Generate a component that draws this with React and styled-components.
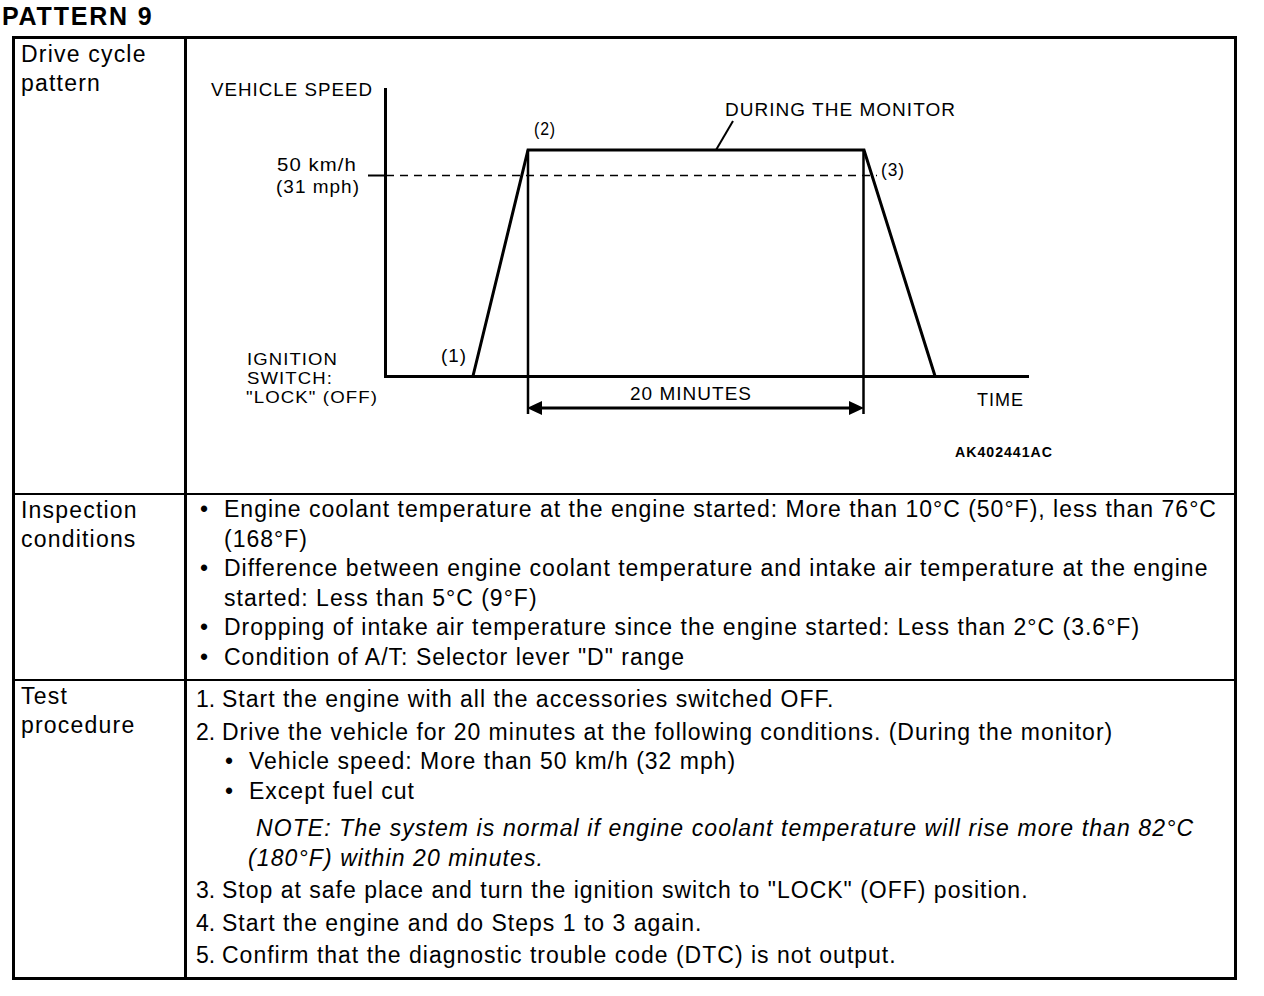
import styled, { createGlobalStyle } from 'styled-components'

const GlobalStyle = createGlobalStyle`
  html, body {
    margin: 0;
    padding: 0;
    background: #fff;
    color: #000;
    font-family: "Liberation Sans", Arial, sans-serif;
  }
`

const labels = [
  { text: 'VEHICLE SPEED', x: 211, y: 96, len: 162 },
  { text: 'DURING THE MONITOR', x: 725, y: 116, len: 231 },
  { text: '(2)', x: 534, y: 135, len: 22 },
  { text: '50 km/h', x: 277, y: 171, len: 80 },
  { text: '(31 mph)', x: 276, y: 193, len: 84 },
  { text: '(3)', x: 881, y: 176, len: 24 },
  { text: '(1)', x: 441, y: 362, len: 26 },
  { text: 'IGNITION', x: 247, y: 365, len: 91, small: true },
  { text: 'SWITCH:', x: 247, y: 384, len: 86, small: true },
  { text: '"LOCK" (OFF)', x: 246, y: 403, len: 132, small: true },
  { text: '20 MINUTES', x: 630, y: 400, len: 122 },
  { text: 'TIME', x: 977, y: 406, len: 47 },
]

function DriveCycleChart() {
  return (
    <Chart width="1047" height="454" viewBox="0 0 1047 454">
      {/* drawn in page coordinates, shifted to the cell origin */}
      <g transform="translate(-187 -39)" stroke="#000" fill="none">
        <line x1="385.5" y1="88" x2="385.5" y2="378" strokeWidth="3" />
        <line x1="384" y1="376.5" x2="1029" y2="376.5" strokeWidth="3" />
        <line x1="368" y1="175.5" x2="386" y2="175.5" strokeWidth="2" />
        <line x1="386" y1="175.5" x2="877" y2="175.5" strokeWidth="1.5" strokeDasharray="8 6" />
        <polyline points="473,376 528,150 864,150 935,376" strokeWidth="3" strokeLinejoin="miter" />
        <line x1="528" y1="150" x2="528" y2="414" strokeWidth="2.5" />
        <line x1="863.5" y1="150" x2="863.5" y2="414" strokeWidth="2.5" />
        <line x1="733" y1="121" x2="716" y2="150" strokeWidth="2" />
        <line x1="538" y1="408" x2="852" y2="408" strokeWidth="3" />
        <polygon points="527,408 542,401 542,415" fill="#000" stroke="none" />
        <polygon points="864,408 849,401 849,415" fill="#000" stroke="none" />
        <g stroke="none" fill="#000">
          {labels.map(l => (
            <ChartLabel
              key={l.text}
              $small={l.small}
              x={l.x}
              y={l.y}
              textLength={l.len}
              lengthAdjust="spacingAndGlyphs">
              {l.text}
            </ChartLabel>
          ))}
          <ChartCode x="955" y="457" textLength="98" lengthAdjust="spacingAndGlyphs">
            AK402441AC
          </ChartCode>
        </g>
      </g>
    </Chart>
  )
}

export default function App() {
  return (
    <>
      <GlobalStyle />
      <Page>
        <Title>PATTERN 9</Title>
        <Sheet>
          <Row $height={454}>
            <Label>
              Drive cycle
              <br />
              pattern
            </Label>
            <Cell>
              <DriveCycleChart />
            </Cell>
          </Row>

          <Row $height={184}>
            <Label>
              Inspection
              <br />
              conditions
            </Label>
            <Cell>
              <List>
                <Item>
                  <Bullet>•</Bullet>
                  <Text>
                    <Line>Engine coolant temperature at the engine started: More than 10°C (50°F), less than 76°C</Line>
                    <Line>(168°F)</Line>
                  </Text>
                </Item>
                <Item>
                  <Bullet>•</Bullet>
                  <Text>
                    <Line>Difference between engine coolant temperature and intake air temperature at the engine</Line>
                    <Line>started: Less than 5°C (9°F)</Line>
                  </Text>
                </Item>
                <Item>
                  <Bullet>•</Bullet>
                  <Text>
                    <Line>Dropping of intake air temperature since the engine started: Less than 2°C (3.6°F)</Line>
                  </Text>
                </Item>
                <Item>
                  <Bullet>•</Bullet>
                  <Text>
                    <Line>Condition of A/T: Selector lever "D" range</Line>
                  </Text>
                </Item>
              </List>
            </Cell>
          </Row>

          <Row $height={296}>
            <Label>
              Test
              <br />
              procedure
            </Label>
            <Cell>
              <Steps>
                <Step>
                  <Num>1.</Num>
                  <Text>
                    <Line>Start the engine with all the accessories switched OFF.</Line>
                  </Text>
                </Step>
                <Step>
                  <Num>2.</Num>
                  <Text>
                    <Line>Drive the vehicle for 20 minutes at the following conditions. (During the monitor)</Line>
                    <SubList>
                      <SubItem>
                        <Bullet $sub>•</Bullet>
                        <Line>Vehicle speed: More than 50 km/h (32 mph)</Line>
                      </SubItem>
                      <SubItem>
                        <Bullet $sub>•</Bullet>
                        <Line>Except fuel cut</Line>
                      </SubItem>
                    </SubList>
                    <Note>
                      <Line $indent>NOTE: The system is normal if engine coolant temperature will rise more than 82°C</Line>
                      <Line>(180°F) within 20 minutes.</Line>
                    </Note>
                  </Text>
                </Step>
                <Step>
                  <Num>3.</Num>
                  <Text>
                    <Line>Stop at safe place and turn the ignition switch to "LOCK" (OFF) position.</Line>
                  </Text>
                </Step>
                <Step>
                  <Num>4.</Num>
                  <Text>
                    <Line>Start the engine and do Steps 1 to 3 again.</Line>
                  </Text>
                </Step>
                <Step>
                  <Num>5.</Num>
                  <Text>
                    <Line>Confirm that the diagnostic trouble code (DTC) is not output.</Line>
                  </Text>
                </Step>
              </Steps>
            </Cell>
          </Row>
        </Sheet>
      </Page>
    </>
  )
}

const Page = styled.div`
  width: 1264px;
  height: 996px;
  overflow: hidden;
`

const Title = styled.h1`
  margin: 4px 0 0 2px;
  font-size: 25px;
  line-height: 24px;
  font-weight: bold;
  letter-spacing: 1.8px;
`

const Sheet = styled.div`
  margin: 8px 0 0 12px;
  width: 1225px;
  box-sizing: border-box;
  border: 3px solid #000;
  display: flex;
  flex-direction: column;
`

const Row = styled.div`
  display: grid;
  grid-template-columns: 172px 1fr;
  height: ${p => p.$height}px;

  & + & {
    border-top: 2px solid #000;
  }
`

const Label = styled.div`
  border-right: 3px solid #000;
  padding: 1px 6px;
  font-size: 23px;
  line-height: 29px;
  letter-spacing: 1.2px;
`

const Cell = styled.div`
  position: relative;
  font-size: 23px;
  line-height: 29.5px;
  letter-spacing: 1px;
  overflow: hidden;
`

const Chart = styled.svg`
  display: block;
`

const ChartLabel = styled.text`
  font-family: "Liberation Sans", Arial, sans-serif;
  font-size: ${p => (p.$small ? 17 : 18.5)}px;
`

const ChartCode = styled.text`
  font-family: "Liberation Sans", Arial, sans-serif;
  font-size: 14px;
  font-weight: bold;
`

const List = styled.div`
  display: flex;
  flex-direction: column;
`

const Item = styled.div`
  display: flex;
`

const Bullet = styled.span`
  flex: 0 0 auto;
  box-sizing: border-box;
  width: ${p => (p.$sub ? 27 : 37)}px;
  padding-left: ${p => (p.$sub ? 3 : 13)}px;
`

const Text = styled.div`
  flex: 1;
  min-width: 0;
`

const Line = styled.div`
  white-space: nowrap;
  text-indent: ${p => (p.$indent ? 8 : 0)}px;
`

const Steps = styled.div`
  display: flex;
  flex-direction: column;
  gap: 3px;
  padding-top: 4px;
`

const Step = styled.div`
  display: flex;
`

const Num = styled.span`
  flex: 0 0 auto;
  box-sizing: border-box;
  width: 35px;
  padding-left: 9px;
  letter-spacing: 0;
`

const SubList = styled.div`
  display: flex;
  flex-direction: column;
`

const SubItem = styled.div`
  display: flex;
`

const Note = styled.div`
  margin-top: 8px;
  padding-left: 26px;
  font-style: italic;
  letter-spacing: 1.1px;
`
